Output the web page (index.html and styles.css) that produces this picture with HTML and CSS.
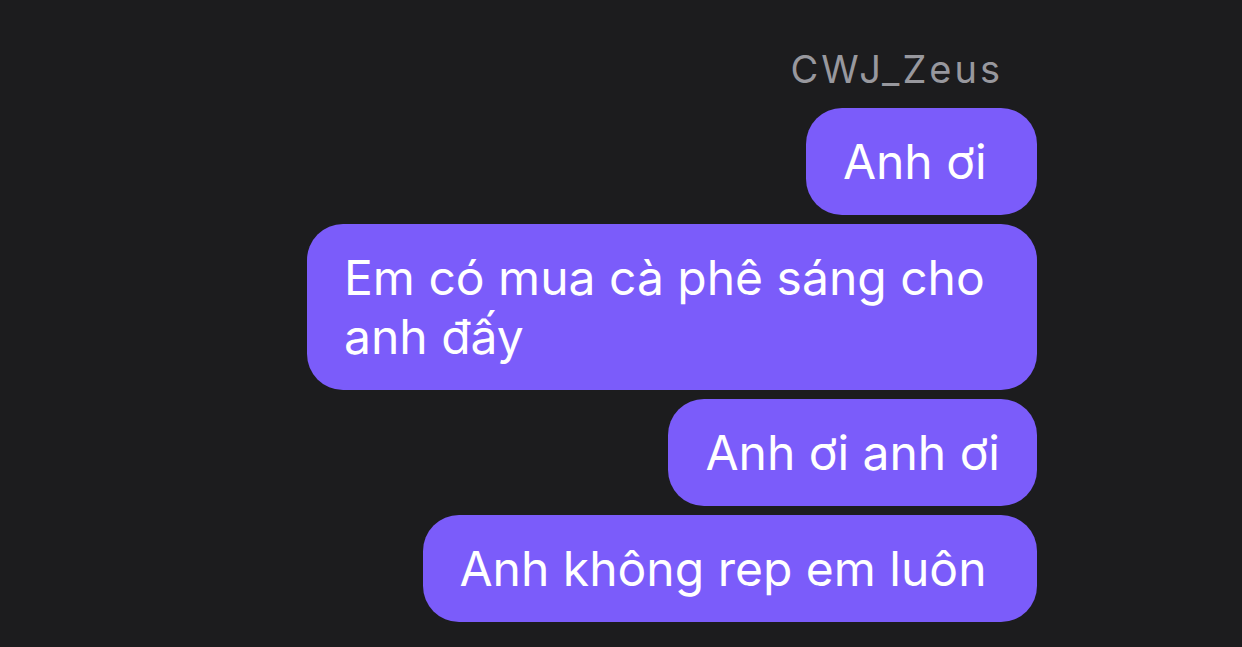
FILE: index.html
```html
<!DOCTYPE html>
<html lang="vi">
<head>
    <meta charset="UTF-8">
    <meta name="viewport" content="width=device-width, initial-scale=1.0">
    <title>CWJ_Zeus</title>
    <link rel="stylesheet" href="styles.css">
</head>
<body>
    <div class="chat">
        <div class="sender">CWJ_Zeus</div>
        <div class="bubble">Anh ơi </div>
        <div class="bubble">Em có mua cà phê sáng cho anh đấy</div>
        <div class="bubble">Anh ơi anh ơi</div>
        <div class="bubble">Anh không rep em luôn </div>
    </div>
</body>
</html>
```

FILE: styles.css
```css
* {
    margin: 0;
    padding: 0;
    box-sizing: border-box;
}

body {
    background: #1c1c1e;
    color: #fff;
    font-family: 'Inter', 'Noto Sans', sans-serif;
    min-height: 100vh;
}

.chat {
    display: flex;
    flex-direction: column;
    align-items: flex-end;
    gap: 9px;
    padding: 46px 205px 0 0;
}

.sender {
    color: #98989e;
    font-size: 38px;
    line-height: 46px;
    letter-spacing: 3px;
    margin-right: 34px;
    margin-bottom: 7px;
}

.bubble {
    background: #7b5cfa;
    color: #fff;
    font-size: 48px;
    line-height: 59px;
    padding: 24px 37px;
    border-radius: 36px;
    max-width: 730px;
    white-space: break-spaces;
}
```
